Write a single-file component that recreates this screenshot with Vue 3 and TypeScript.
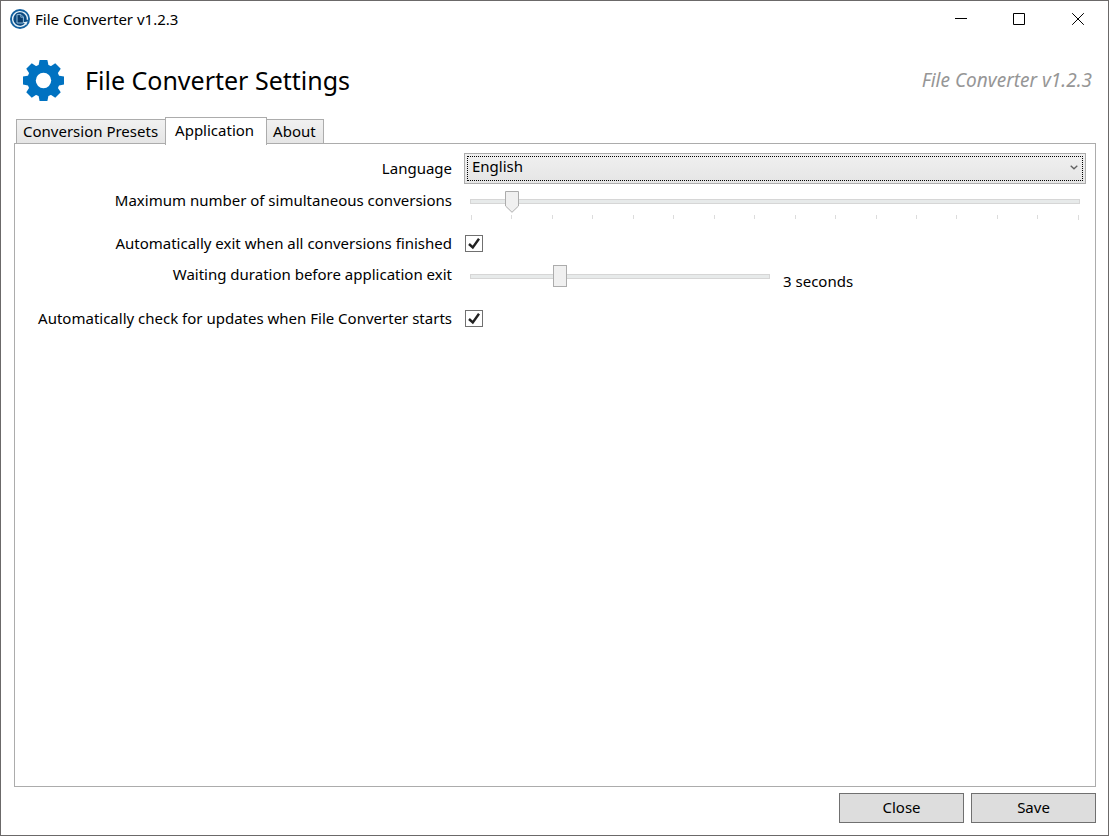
<script setup lang="ts">
import { computed, ref } from 'vue'

const appName = 'File Converter v1.2.3'
const tabs: string[] = ['Conversion Presets', 'Application', 'About']
const activeTab = ref('Application')
const language = ref('English')
const maxConversions = ref(2)
const exitWhenDone = ref(true)
const exitDelay = ref(3)
const checkUpdates = ref(true)
const delayText = computed(() => `${exitDelay.value} seconds`)
const toothAngles: number[] = [0, 45, 90, 135, 180, 225, 270, 315]
</script>

<template>
  <div class="window">
    <header class="titlebar">
      <svg class="app-icon" viewBox="0 0 20 20" aria-hidden="true">
        <circle cx="10" cy="10" r="10" fill="#12609f" />
        <circle cx="10" cy="10" r="7.4" fill="#0c4a80" stroke="#e3f0f8" stroke-width="1.4" stroke-dasharray="42 4.5" transform="rotate(38 10 10)" />
        <path d="M7 5.6h4l2.4 2.4v6H7z" fill="#0a3c6b" stroke="#8fbbdb" stroke-width="1" />
        <path d="M10.8 5.6v2.6h2.6" fill="none" stroke="#8fbbdb" stroke-width="0.9" />
        <path d="M13.2 13.2l4.4-.6-1.4 3.4z" fill="#e3f0f8" />
      </svg>
      <span class="title">{{ appName }}</span>
      <div class="caption-buttons">
        <button type="button" aria-label="Minimize">
          <svg viewBox="0 0 13 13"><path d="M1 5.5h12" /></svg>
        </button>
        <button type="button" aria-label="Maximize">
          <svg viewBox="0 0 13 13"><path d="M0.5 0.5h11v11h-11z" /></svg>
        </button>
        <button type="button" aria-label="Close window">
          <svg viewBox="0 0 13 13"><path d="M0.2 0.2l11.6 11.6M11.8 0.2l-11.6 11.6" /></svg>
        </button>
      </div>
    </header>

    <div class="heading">
      <svg class="gear" viewBox="-20 -20 40 40" aria-hidden="true">
        <path
          v-for="angle in toothAngles"
          :key="angle"
          d="M-3.8 -20H3.8L5 -14H-5Z"
          :transform="`rotate(${angle})`"
        />
        <circle r="15.8" />
        <circle r="7.5" class="hole" />
      </svg>
      <h1>File Converter Settings</h1>
      <span class="version">{{ appName }}</span>
    </div>

    <nav class="tabs" role="tablist">
      <button
        v-for="tab in tabs"
        :key="tab"
        type="button"
        role="tab"
        class="tab"
        :class="{ active: tab === activeTab }"
        :aria-selected="tab === activeTab"
        @click="activeTab = tab"
      >{{ tab }}</button>
    </nav>

    <main class="panel">
      <form v-if="activeTab === 'Application'" class="settings" @submit.prevent>
        <label for="language">Language</label>
        <div class="select-box">
          <select id="language" v-model="language">
            <option>English</option>
          </select>
          <svg class="chevron" viewBox="0 0 8 5" aria-hidden="true"><path d="M0.7 0.7L4 3.8L7.3 0.7" /></svg>
        </div>

        <label for="max" class="top">Maximum number of simultaneous conversions</label>
        <div class="slider-row stacked">
          <input id="max" v-model.number="maxConversions" class="pointed" type="range" min="1" max="16" />
          <div class="ticks" aria-hidden="true"><i v-for="n in 16" :key="n"></i></div>
        </div>

        <label for="exit">Automatically exit when all conversions finished</label>
        <span class="check">
          <input id="exit" v-model="exitWhenDone" type="checkbox" />
          <svg v-if="exitWhenDone" viewBox="0 0 18 18" aria-hidden="true"><path d="M4 9L7.8 12.5L14 3.7" /></svg>
        </span>

        <label for="delay" class="top">Waiting duration before application exit</label>
        <div class="slider-row">
          <input id="delay" v-model.number="exitDelay" class="short" type="range" min="0" max="10" />
          <output for="delay">{{ delayText }}</output>
        </div>

        <label for="updates">Automatically check for updates when File Converter starts</label>
        <span class="check">
          <input id="updates" v-model="checkUpdates" type="checkbox" />
          <svg v-if="checkUpdates" viewBox="0 0 18 18" aria-hidden="true"><path d="M4 9L7.8 12.5L14 3.7" /></svg>
        </span>
      </form>
    </main>

    <footer class="actions">
      <button type="button">Close</button>
      <button type="button">Save</button>
    </footer>
  </div>
</template>

<style>
body {
  margin: 0;
  background: #fff;
}
</style>

<style scoped>
.window {
  box-sizing: border-box;
  min-height: 100vh;
  display: flex;
  flex-direction: column;
  border: 1px solid #6b6969;
  background: #fff;
  color: #000;
  font: 15px/22px "Noto Sans", "Open Sans", sans-serif;
}
button,
select,
input {
  font: inherit;
  color: inherit;
  margin: 0;
}
.titlebar {
  display: flex;
  align-items: center;
  height: 36px;
  padding-left: 9px;
}
.app-icon {
  width: 20px;
  height: 20px;
  margin-right: 5px;
}
.title {
  font-size: 15px;
}
.caption-buttons {
  display: flex;
  margin-left: auto;
}
.caption-buttons button {
  display: grid;
  place-items: center;
  width: 59px;
  height: 36px;
  padding: 0;
  border: 0;
  background: none;
}
.caption-buttons svg {
  width: 13px;
  height: 13px;
  fill: none;
  stroke: #000;
  stroke-width: 1;
}
.heading {
  box-sizing: border-box;
  display: flex;
  align-items: center;
  height: 80px;
  padding: 6px 16px 0 22px;
}
.gear {
  width: 41px;
  height: 41px;
  margin-right: 21px;
  fill: #0072c1;
}
.hole {
  fill: #fff;
}
h1 {
  margin: 0;
  font-size: 25px;
  line-height: 36px;
  font-weight: 400;
}
.version {
  margin-left: auto;
  font-size: 19px;
  font-style: italic;
  color: #969696;
}
.tabs {
  display: flex;
  align-items: flex-end;
  margin: 0 12px 0 15px;
}
.tab {
  height: 25px;
  padding: 0 7px 2px 6px;
  margin-right: -1px;
  border: 1px solid #acacac;
  background: linear-gradient(#f1f1f1, #e5e5e5);
  line-height: 22px;
}
.tab.active {
  position: relative;
  z-index: 1;
  height: 28px;
  padding: 0 12px 4px 9px;
  margin-bottom: -1px;
  border-bottom: 0;
  background: #fff;
}
.panel {
  flex: 1;
  margin: -1px 12px 0 13px;
  padding: 9px;
  border: 1px solid #acacac;
}
.settings {
  display: grid;
  grid-template-columns: 428px minmax(0, 1fr);
  grid-template-rows: 32px 44px 30px 44px 32px;
  column-gap: 12px;
  align-items: center;
}
label {
  padding-bottom: 2px;
  text-align: right;
  white-space: nowrap;
  justify-self: end;
}
label.top {
  align-self: start;
  padding-top: 4px;
}
.select-box {
  position: relative;
  align-self: start;
}
select {
  display: block;
  width: 100%;
  height: 31px;
  padding: 0 24px 6px 7px;
  border: 1px solid #acacac;
  border-radius: 0;
  appearance: none;
  background: linear-gradient(#f0f0f0, #e5e5e5);
  outline: 1px dotted #000;
  outline-offset: -4px;
}
.chevron {
  position: absolute;
  right: 8px;
  top: 12px;
  width: 8px;
  height: 5px;
  fill: none;
  stroke: #606060;
  stroke-width: 1.3;
  pointer-events: none;
}
.slider-row {
  align-self: start;
  display: flex;
  padding-top: 6px;
}
.stacked {
  flex-direction: column;
}
input[type="range"] {
  appearance: none;
  width: 100%;
  height: 22px;
  background:
    linear-gradient(#e7eaea, #e7eaea) center 10px / calc(100% - 14px) 3px no-repeat,
    linear-gradient(#d6d6d6, #d6d6d6) center 9px / calc(100% - 12px) 5px no-repeat;
}
input.pointed {
  background-position: center 9px, center 8px;
}
input[type="range"].short {
  width: 312px;
}
input[type="range"]::-webkit-slider-thumb {
  appearance: none;
  box-sizing: border-box;
  width: 14px;
  height: 22px;
  border: 1px solid #acacac;
  background: #f0f0f0;
}
input.pointed::-webkit-slider-thumb {
  border: 0;
  background: url("data:image/svg+xml,%3Csvg xmlns='http://www.w3.org/2000/svg' width='14' height='22'%3E%3Cpath d='M.5.5h13v14.5l-6.5 6.3l-6.5-6.3z' fill='%23f0f0f0' stroke='%23acacac'/%3E%3C/svg%3E") no-repeat;
}
.ticks {
  display: flex;
  justify-content: space-between;
  height: 5px;
  padding: 0 7px;
  margin-top: 2px;
}
.ticks i {
  width: 1px;
  height: 4px;
  background: #dcdcdc;
}
.ticks i:first-child,
.ticks i:last-child {
  height: 5px;
}
output {
  padding: 5px 0 0 7px;
}
.check {
  display: grid;
  align-items: start;
  width: 18px;
  height: 18px;
  margin-left: 1px;
}
.check > * {
  grid-area: 1 / 1;
}
.check input {
  appearance: none;
  box-sizing: border-box;
  width: 18px;
  height: 17px;
  border: 1px solid #707070;
  background: #fff;
}
.check svg {
  width: 18px;
  height: 18px;
  fill: none;
  stroke: #212121;
  stroke-width: 2.4;
  pointer-events: none;
}
.actions {
  display: flex;
  justify-content: flex-end;
  gap: 7px;
  padding: 6px 12px 12px;
}
.actions button {
  width: 125px;
  height: 30px;
  padding: 0 0 2px;
  border: 1px solid #707070;
  background: #ddd;
}
</style>
